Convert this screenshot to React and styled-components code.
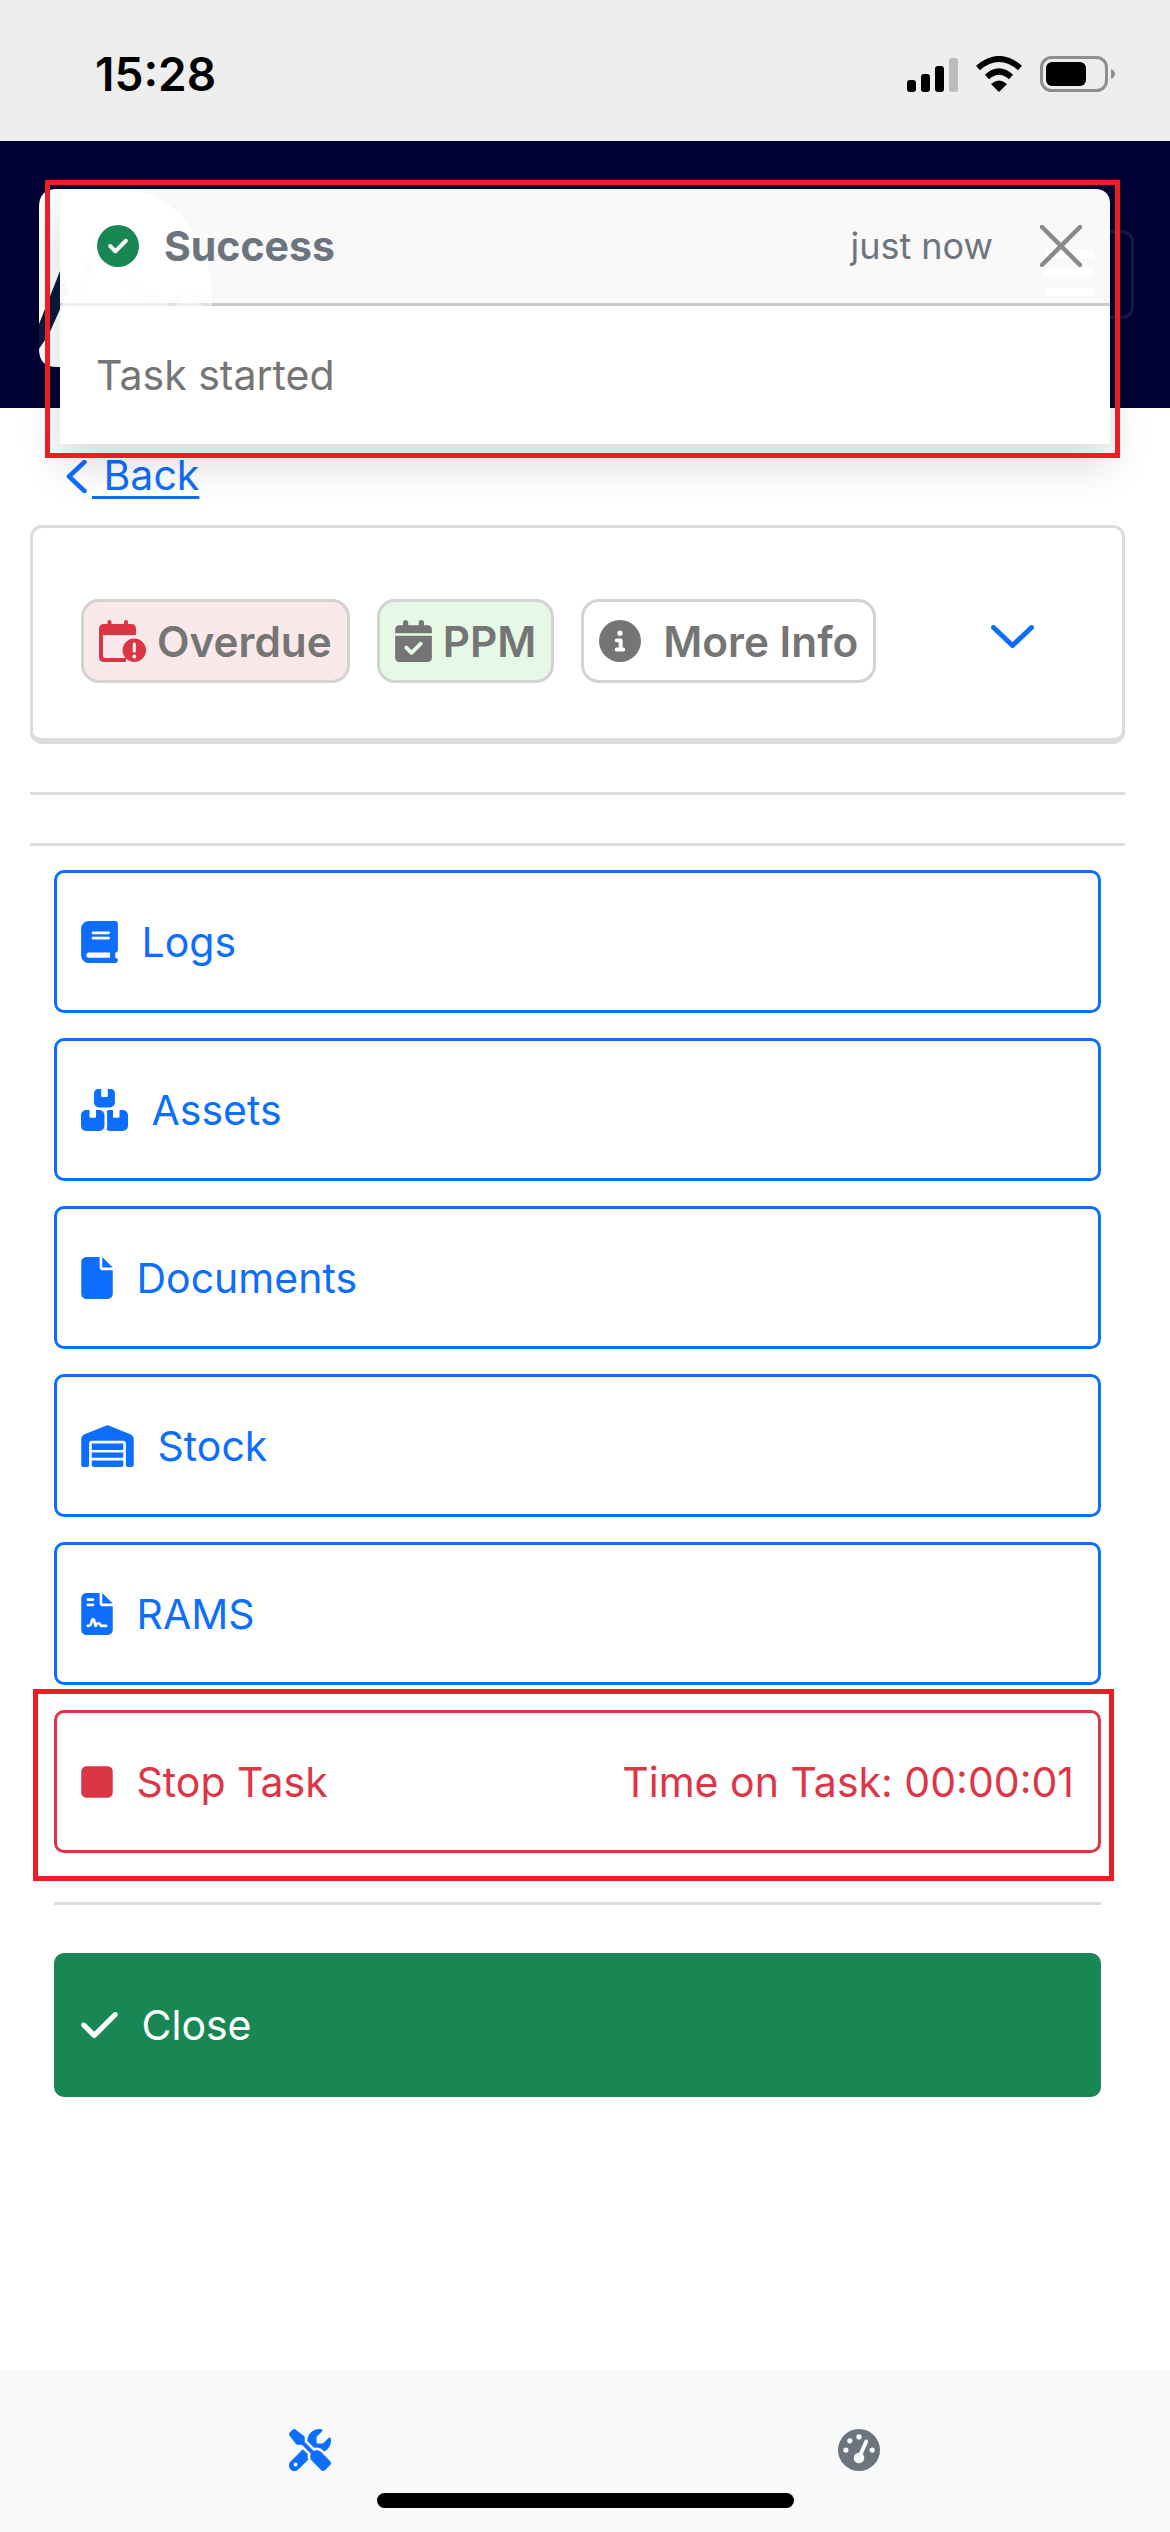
import styled, { createGlobalStyle } from "styled-components";
import {
  FaBook,
  FaBoxesStacked,
  FaCalendarCheck,
  FaCheck,
  FaCircleCheck,
  FaCircleInfo,
  FaFile,
  FaFileContract,
  FaGaugeHigh,
  FaScrewdriverWrench,
  FaStop,
  FaWarehouse,
} from "react-icons/fa6";

const BLUE = "#0d6efd";
const RED = "#dc3545";
const GREEN = "#198754";
const GREY = "#757575";

// icon widths at 42px tall, react-icons would otherwise force a square box
const actions = [
  { label: "Logs", Icon: FaBook, width: 37 },
  { label: "Assets", Icon: FaBoxesStacked, width: 47 },
  { label: "Documents", Icon: FaFile, width: 32 },
  { label: "Stock", Icon: FaWarehouse, width: 53 },
  { label: "RAMS", Icon: FaFileContract, width: 32 },
];

export default function App() {
  return (
    <Page>
      <GlobalStyle />
      <StatusBar>
        <Clock>15:28</Clock>
        <StatusIcons>
          <SignalIcon />
          <WifiIcon />
          <BatteryIcon />
        </StatusIcons>
      </StatusBar>

      <Navbar>
        <Logo />
        <Toggler>
          <TogglerBar />
          <TogglerBar />
          <TogglerBar />
        </Toggler>
      </Navbar>

      <Toast>
        <ToastHeader>
          <FaCircleCheck />
          <ToastTitle>Success</ToastTitle>
          <ToastTime>just now</ToastTime>
          <CloseIcon />
        </ToastHeader>
        <ToastBody>Task started</ToastBody>
      </Toast>
      <Annotation $top={180} $left={45} $width={1075} $height={278} />
      <Annotation $top={1689} $left={33} $width={1081} $height={192} />

      <Content>
        <BackLink href="#">
          <ChevronLeft /> Back
        </BackLink>

        <InfoCard>
          <Badge $bg="#f9e9ea" $iconWidth={47}>
            <OverdueIcon />
            Overdue
          </Badge>
          <Badge $bg="#e6f9e6" $iconWidth={37}>
            <FaCalendarCheck />
            PPM
          </Badge>
          <Badge $bg="#fff" $iconWidth={42} $gap={22}>
            <FaCircleInfo />
            More Info
          </Badge>
          <ChevronDown />
        </InfoCard>

        <Rule $top={48} />
        <Rule $top={48} />

        <Actions>
          {actions.map(({ label, Icon, width }) => (
            <ActionRow key={label} $iconWidth={width}>
              <Icon />
              {label}
            </ActionRow>
          ))}
          <ActionRow $color={RED} $iconWidth={32}>
            <FaStop />
            Stop Task
            <TaskTime>Time on Task: 00:00:01</TaskTime>
          </ActionRow>
          <Rule $top={24} />
          <CloseButton $iconWidth={37}>
            <FaCheck />
            Close
          </CloseButton>
        </Actions>
      </Content>

      <TabBar>
        <FaScrewdriverWrench color={BLUE} />
        <FaGaugeHigh color="#6c757d" />
      </TabBar>
      <HomeIndicator />
    </Page>
  );
}

function SignalIcon() {
  return (
    <svg width="51" height="34" viewBox="0 0 51 34">
      <rect x="0" y="22" width="9" height="12" rx="3" />
      <rect x="14" y="16" width="9" height="18" rx="3" />
      <rect x="28" y="8" width="9" height="26" rx="3" />
      <rect x="42" y="0" width="9" height="34" rx="3" fill="#bdbdbd" />
    </svg>
  );
}

function WifiIcon() {
  return (
    <svg width="48" height="36" viewBox="0 0 48 36">
      <path d="M3 12Q24 -6 45 12" fill="none" stroke="#000" strokeWidth="6" />
      <path d="M12 21Q24 10 36 21" fill="none" stroke="#000" strokeWidth="6" />
      <path d="M16 28Q24 21 32 28L24 36Z" />
    </svg>
  );
}

function BatteryIcon() {
  return (
    <svg width="75" height="36" viewBox="0 0 75 36">
      <rect x="1.5" y="1.5" width="65" height="33" rx="10" fill="none" stroke="#8e8e8e" strokeWidth="3" />
      <rect x="6" y="6" width="40" height="24" rx="6" />
      <path d="M71 13Q75 15 75 18Q75 21 71 23Z" fill="#8e8e8e" />
    </svg>
  );
}

function Logo() {
  return (
    <svg width="173" height="178" viewBox="0 0 173 178">
      <path d="M18 0H80C135 0 173 50 173 110V178H18Q0 178 0 160V18Q0 0 18 0Z" fill="#fff" />
      <path d="M21 82L0 135V160L10 145L30 100Z" fill="#0b1a3c" />
      <path d="M62 40L100 55L90 95L120 110M40 105L62 40" fill="none" stroke="#000033" strokeWidth="8" strokeOpacity="0.4" />
      <path d="M130 130C130 95 170 95 170 130" fill="none" stroke="#000033" strokeWidth="8" strokeOpacity="0.4" />
    </svg>
  );
}

function CloseIcon() {
  return (
    <CloseSvg viewBox="0 0 42 42">
      <path d="M2 2L40 40M40 2L2 40" fill="none" stroke="#8a8a8a" strokeWidth="4.5" strokeLinecap="round" />
    </CloseSvg>
  );
}

function ChevronLeft() {
  return (
    <BackChevron viewBox="0 0 21 33">
      <path d="M18.5 2L3 16.5L18.5 31" fill="none" stroke={BLUE} strokeWidth="4.5" strokeLinecap="round" strokeLinejoin="round" />
    </BackChevron>
  );
}

function ChevronDown() {
  return (
    <DownChevron viewBox="0 0 43 23">
      <path d="M2.5 2.5L21.5 20.5L40.5 2.5" fill="none" stroke={BLUE} strokeWidth="5" strokeLinecap="round" strokeLinejoin="round" />
    </DownChevron>
  );
}

function OverdueIcon() {
  return (
    <svg viewBox="0 0 47 42" fill={RED}>
      <rect x="8.5" y="0" width="4" height="8" rx="2" />
      <rect x="25" y="0" width="4" height="8" rx="2" />
      <path d="M5 4H32Q37 4 37 9V15H0V9Q0 4 5 4Z" />
      <path d="M0 15H4V36Q4 38 6 38H27V42H5Q0 42 0 37Z" />
      <circle cx="35.3" cy="30.3" r="11.7" />
      <rect x="33.8" y="22.5" width="3" height="10" rx="1.5" fill="#fff" />
      <circle cx="35.3" cy="36.5" r="1.9" fill="#fff" />
    </svg>
  );
}

const GlobalStyle = createGlobalStyle`
  body {
    margin: 0;
    background: #fff;
    font-family: Inter, "Liberation Sans", sans-serif;
  }
`;

const Page = styled.div`
  position: relative;
  display: flex;
  flex-direction: column;
  width: 1170px;
  height: 2532px;
  overflow: hidden;
  font-size: 41px;
`;

const StatusBar = styled.div`
  display: flex;
  justify-content: space-between;
  align-items: flex-start;
  box-sizing: border-box;
  height: 141px;
  padding: 55px 55px 0 95px;
  background: #eee;
`;

const Clock = styled.div`
  font-size: 46px;
  font-weight: 600;
  line-height: 38px;
  color: #000;
`;

const StatusIcons = styled.div`
  display: flex;
  align-items: flex-end;
  gap: 17px;
  height: 37px;
`;

const Navbar = styled.nav`
  display: flex;
  justify-content: space-between;
  align-items: flex-start;
  box-sizing: border-box;
  height: 267px;
  padding: 48px 36px 0 39px;
  background: #000033;
`;

const Toggler = styled.div`
  display: flex;
  flex-direction: column;
  justify-content: center;
  gap: 11px;
  box-sizing: border-box;
  width: 129px;
  height: 89px;
  margin-top: 41px;
  padding: 0 37px 3px;
  border: 3px solid rgba(255, 255, 255, 0.1);
  border-radius: 12px;
`;

const TogglerBar = styled.span`
  height: 8px;
  border-radius: 4px;
  background: #fff;
`;

const Toast = styled.div`
  position: absolute;
  top: 189px;
  left: 60px;
  width: 1050px;
  border-radius: 13px 13px 0 0;
  box-shadow: 0 21px 42px rgba(0, 0, 0, 0.15);
`;

const ToastHeader = styled.div`
  display: flex;
  align-items: center;
  box-sizing: border-box;
  height: 117px;
  padding: 0 28px 0 37px;
  border-bottom: 3px solid rgba(235, 235, 235, 0.85);
  border-radius: 13px 13px 0 0;
  background: rgba(255, 255, 255, 0.975);
  background-clip: padding-box;
  color: #6c757d;

  & > svg:first-child {
    width: 42px;
    height: 42px;
    color: ${GREEN};
  }
`;

const ToastTitle = styled.strong`
  margin-left: 25px;
  font-weight: 700;
`;

const ToastTime = styled.small`
  margin-left: auto;
  font-size: 36px;
`;

const CloseSvg = styled.svg`
  width: 42px;
  height: 42px;
  margin-left: 47px;
`;

const ToastBody = styled.div`
  display: flex;
  align-items: center;
  box-sizing: border-box;
  height: 138px;
  padding-left: 36px;
  background: #fff;
  color: ${GREY};
`;

const Annotation = styled.div`
  position: absolute;
  z-index: 5;
  top: ${(p) => p.$top}px;
  left: ${(p) => p.$left}px;
  box-sizing: border-box;
  width: ${(p) => p.$width}px;
  height: ${(p) => p.$height}px;
  border: 5px solid #ee1c25;
`;

const Content = styled.main`
  display: flex;
  flex-direction: column;
  padding: 36px 45px 0 30px;
`;

const BackLink = styled.a`
  display: block;
  height: 62px;
  margin-left: 36px;
  margin-bottom: 19px;
  line-height: 62px;
  color: ${BLUE};
  text-decoration-thickness: 3px;
  text-underline-offset: 6px;
`;

const BackChevron = styled.svg`
  width: 21px;
  height: 33px;
  margin-right: 5px;
  vertical-align: -3px;
`;

const InfoCard = styled.section`
  display: flex;
  align-items: center;
  gap: 27px;
  box-sizing: border-box;
  height: 219px;
  padding: 16px 0 0 48px;
  border: 3px solid #dcdcdc;
  border-bottom-width: 6px;
  border-radius: 12px;
`;

const Badge = styled.div`
  display: flex;
  align-items: center;
  gap: ${(p) => p.$gap || 11}px;
  box-sizing: border-box;
  height: 84px;
  padding: 0 15px;
  border: 3px solid #d3d3d3;
  border-radius: 18px;
  background: ${(p) => p.$bg};
  color: ${GREY};
  font-size: 42.3px;
  font-weight: 600;

  svg {
    width: ${(p) => p.$iconWidth}px;
    height: 42px;
  }
`;

const DownChevron = styled.svg`
  width: 43px;
  height: 23px;
  margin: -10px 0 0 88px;
`;

const Rule = styled.hr`
  align-self: stretch;
  flex: none;
  height: 3px;
  margin: ${(p) => p.$top}px 0 0;
  border: 0;
  background: #dcdfe2;
`;

const Actions = styled.div`
  display: flex;
  flex-direction: column;
  gap: 25px;
  margin: 24px 24px 0;
`;

const ActionRow = styled.div`
  display: flex;
  align-items: center;
  gap: 23.5px;
  box-sizing: border-box;
  height: 143px;
  padding: 0 24px;
  border: 3px solid ${(p) => p.$color || BLUE};
  border-radius: 10px;
  color: ${(p) => p.$color || BLUE};

  svg {
    width: ${(p) => p.$iconWidth}px;
    height: 42px;
  }
`;

const TaskTime = styled.span`
  margin-left: auto;
`;

const CloseButton = styled(ActionRow)`
  height: 144px;
  margin-top: 23px;
  border-color: ${GREEN};
  background: ${GREEN};
  color: #fff;
`;

const TabBar = styled.footer`
  display: flex;
  justify-content: space-between;
  box-sizing: border-box;
  width: 100%;
  height: 162px;
  margin-top: auto;
  padding: 59px 290px 0 289px;
  background: #f8f9fa;

  svg {
    width: 42px;
    height: 42px;
  }
`;

const HomeIndicator = styled.div`
  position: absolute;
  left: 377px;
  bottom: 24px;
  width: 417px;
  height: 15px;
  border-radius: 8px;
  background: #000;
`;
